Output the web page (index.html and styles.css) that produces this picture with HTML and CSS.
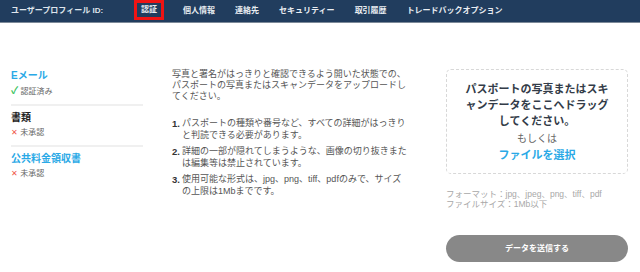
FILE: index.html
```html
<html>
<head>
	<title>本人確認 - 認証</title>
	<link rel="stylesheet" href="styles.css">
</head>
<body>
<div class="nav">
	<span class="nav-title">ユーザープロフィール ID:</span>
	<span class="nav-item active">認証</span>
	<span class="nav-item">個人情報</span>
	<span class="nav-item">連絡先</span>
	<span class="nav-item">セキュリティー</span>
	<span class="nav-item">取引履歴</span>
	<span class="nav-item">トレードバックオプション</span>
</div>

<div class="main">
	<div class="status">
		<div class="block">
			<div class="block-title blue">Eメール</div>
			<div class="block-state"><span class="ok">&#10003;</span> 認証済み</div>
		</div>
		<div class="block">
			<div class="block-title">書類</div>
			<div class="block-state"><span class="ng">&#10005;</span> 未承認</div>
		</div>
		<div class="block last">
			<div class="block-title blue">公共料金領収書</div>
			<div class="block-state"><span class="ng">&#10005;</span> 未承認</div>
		</div>
	</div>

	<div class="info">
		<div class="intro">写真と署名がはっきりと確認できるよう開いた状態での、パスポートの写真またはスキャンデータをアップロードしてください。</div>
		<ol class="rules">
			<li><b>1.</b><span>パスポートの種類や番号など、すべての詳細がはっきりと判読できる必要があります。</span></li>
			<li><b>2.</b><span>詳細の一部が隠れてしまうような、画像の切り抜きまたは編集等は禁止されています。</span></li>
			<li><b>3.</b><span>使用可能な形式は、jpg、png、tiff、pdfのみで、サイズの上限は1Mbまでです。</span></li>
		</ol>
	</div>

	<div class="upload">
		<div class="drop">
			<div class="drop-text">パスポートの写真またはスキャンデータをここへドラッグしてください。</div>
			<div class="drop-or">もしくは</div>
			<div class="drop-link">ファイルを選択</div>
		</div>
		<div class="formats">フォーマット：jpg、jpeg、png、tiff、pdf<br>ファイルサイズ：1Mb以下</div>
		<div class="send">データを送信する</div>
	</div>
</div>
</body>
</html>
```

FILE: styles.css
```css
body {margin:0; font-family: "Liberation Sans", "Noto Sans CJK JP", sans-serif; background:#fff;}

.nav {display:flex; align-items:flex-start; height:22px; padding-left:11px; background:#213d5e; border-bottom:1px solid #7d8a99; color:#fff; font-size:8px; font-weight:bold;}
.nav-title {line-height:21px; margin-right:31px; color:#dfe5ec;}
.nav-item {line-height:21px; margin-right:20px; color:#e9edf2;}
.nav-item.active {line-height:14px; height:14px; padding:0 4px; border:3px solid #f01414; margin-right:19px;}

.main {display:flex; padding:46px 0 0 11px;}

.status {width:132px;}
.block {border-bottom:2px solid #f0f0f0; padding-bottom:6px; margin-bottom:5px;}
.block.last {border-bottom:none;}
.block-title {font-size:10px; font-weight:bold; line-height:14px; color:#222;}
.block-title.blue {color:#2aa9e6;}
.block-state {font-size:8px; line-height:12px; color:#666; margin-top:2px;}
.ok {color:#37c25a; font-size:10px; font-weight:bold;}
.ng {color:#f0584c; font-size:8px;}

.info {width:238px; margin-left:29px; color:#555; font-size:9px; line-height:11px;}
.intro {margin-top:0;}
.rules {list-style:none; margin:16px 0 0 0; padding:0;}
.rules li {display:flex; margin-bottom:5px; line-height:11.5px;}
.rules li b {width:10px; flex:none; color:#333; font-size:9.5px;}

.upload {width:182px; margin-left:36px;}
.drop {height:92px; border:1px dashed #d8d8d8; border-radius:5px; padding:11px 16px 0; text-align:center;}
.drop-text {font-size:11px; font-weight:bold; line-height:16px; color:#333c48;}
.drop-or {font-size:10px; line-height:16px; margin-top:2px; color:#666;}
.drop-link {font-size:11px; font-weight:bold; line-height:16px; color:#2aa9e6;}
.formats {margin-top:15px; font-size:8.5px; line-height:10px; color:#a8a8a8;}
.send {margin-top:26px; height:27px; line-height:27px; border-radius:14px; background:#888; color:#fff; font-size:8px; font-weight:bold; text-align:center;}
```
